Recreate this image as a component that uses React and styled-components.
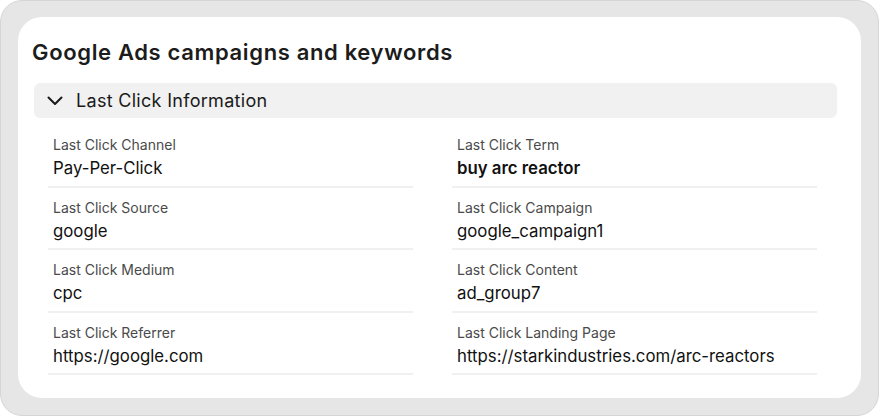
import styled, { createGlobalStyle } from "styled-components";

const GlobalStyle = createGlobalStyle`
  html, body {
    margin: 0;
    padding: 0;
    background: #ffffff;
  }
  body {
    font-family: "Inter", "Liberation Sans", sans-serif;
    color: #111;
  }
`;

const Frame = styled.div`
  box-sizing: border-box;
  width: 879px;
  height: 416px;
  padding: 16px 17px 17px 17px;
  background: #e6e6e6;
  border: 1px solid #d6d6d6;
  border-radius: 22px;
`;

const Card = styled.section`
  box-sizing: border-box;
  height: 100%;
  background: #fff;
  border-radius: 24px;
  padding: 21px 24px 0 14px;
`;

const Title = styled.h2`
  margin: 0 0 17px;
  font-size: 22px;
  line-height: 28px;
  font-weight: 600;
  color: #1c1c1c;
  letter-spacing: 0.65px;
`;

const AccordionHeader = styled.button`
  box-sizing: border-box;
  display: flex;
  align-items: center;
  gap: 13px;
  width: calc(100% - 2px);
  height: 35px;
  margin-left: 2px;
  padding: 0 0 0 13px;
  background: #f1f1f1;
  border: none;
  border-radius: 6px;
  font-family: inherit;
  font-size: 18px;
  letter-spacing: 0.3px;
  color: #1a1a1a;
  cursor: pointer;
  text-align: left;
`;

const Grid = styled.div`
  display: grid;
  grid-template-columns: 365px 365px;
  column-gap: 39px;
  padding: 7px 0 0 16px;
`;

const Field = styled.div`
  box-sizing: border-box;
  height: 62.5px;
  padding: 10px 0 0 5px;
  border-bottom: 2px solid #f0f0f0;
`;

const Label = styled.div`
  font-size: 14px;
  line-height: 20px;
  color: #4a4a4a;
`;

const Value = styled.div`
  margin-top: 2px;
  font-size: 16.8px;
  line-height: 22px;
  color: #111;
  font-weight: ${({ $strong }) => ($strong ? 600 : 400)};
`;

const Chevron = () => (
  <svg width="16" height="10" viewBox="0 0 16 10" fill="none">
    <path d="M1.5 1.5 L8 8 L14.5 1.5" stroke="#1a1a1a" strokeWidth="2" strokeLinecap="round" strokeLinejoin="round" />
  </svg>
);

const left = [
  ["Last Click Channel", "Pay-Per-Click"],
  ["Last Click Source", "google"],
  ["Last Click Medium", "cpc"],
  ["Last Click Referrer", "https://google.com"],
];

const right = [
  ["Last Click Term", "buy arc reactor", true],
  ["Last Click Campaign", "google_campaign1"],
  ["Last Click Content", "ad_group7"],
  ["Last Click Landing Page", "https://starkindustries.com/arc-reactors"],
];

export default function App() {
  const rows = left.flatMap((l, i) => [l, right[i]]);
  return (
    <>
      <GlobalStyle />
      <Frame>
        <Card>
          <Title>Google Ads campaigns and keywords</Title>
          <AccordionHeader>
            <Chevron />
            Last Click Information
          </AccordionHeader>
          <Grid>
            {rows.map(([label, value, strong]) => (
              <Field key={label}>
                <Label>{label}</Label>
                <Value $strong={strong}>{value}</Value>
              </Field>
            ))}
          </Grid>
        </Card>
      </Frame>
    </>
  );
}
